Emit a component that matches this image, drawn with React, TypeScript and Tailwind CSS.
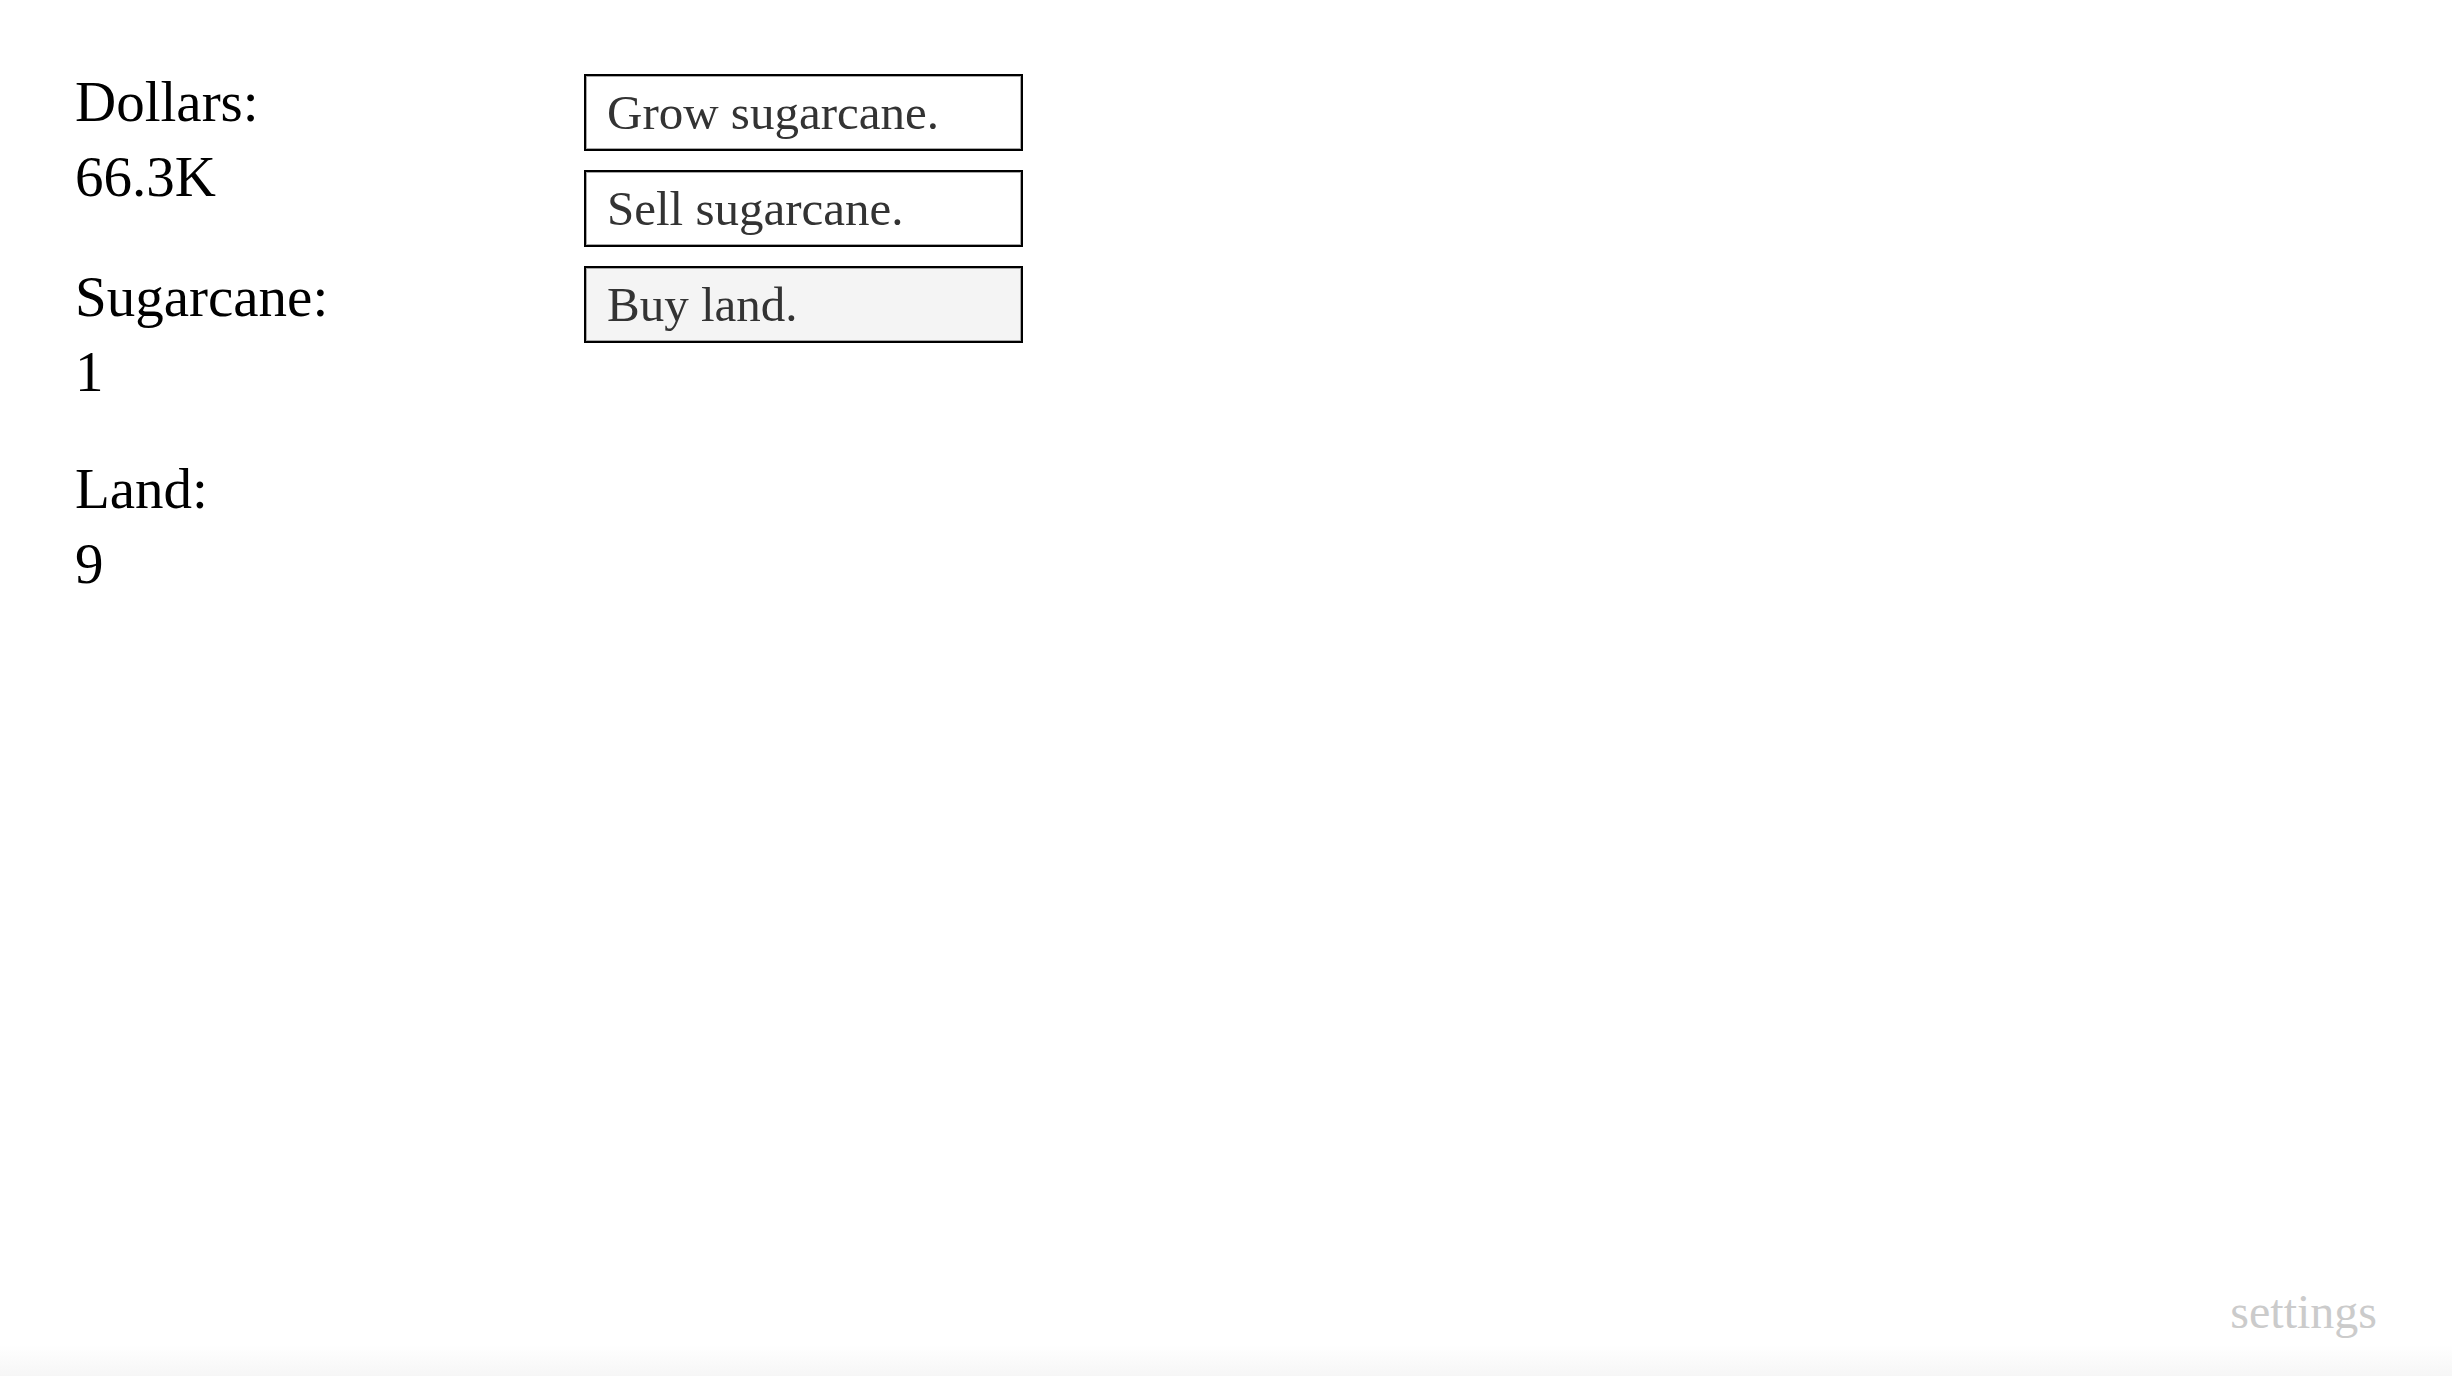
const stats = [
  { label: 'Dollars:', value: '66.3K', gap: 'mt-0' },
  { label: 'Sugarcane:', value: '1', gap: 'mt-[45px]' },
  { label: 'Land:', value: '9', gap: 'mt-[42px]' },
]

const actions = [
  { label: 'Grow sugarcane.', muted: false },
  { label: 'Sell sugarcane.', muted: false },
  { label: 'Buy land.', muted: true },
]

export default function App() {
  return (
    <div className="h-screen flex flex-col bg-white font-['Liberation_Serif','Times_New_Roman',serif]">
      <main className="flex px-[75px] pt-[64px]">
        {/* Resources */}
        <div className="w-[509px] shrink-0 flex flex-col">
          {stats.map((s) => (
            <div key={s.label} className={s.gap}>
              <p className="text-[57px] leading-[75px] text-black">{s.label}</p>
              <p className="text-[57px] leading-[75px] text-black">{s.value}</p>
            </div>
          ))}
        </div>

        {/* Actions */}
        <div className="flex flex-col gap-[19px] pt-[10px]">
          {actions.map((a) => (
            <button
              key={a.label}
              className={`w-[439px] h-[77px] border-2 border-black shadow-[inset_0_0_0_1px_#a8a8a8] pl-[21px] text-left text-[49px] leading-[55px] text-[#333] ${
                a.muted ? 'bg-[#f4f4f4]' : 'bg-white'
              }`}
            >
              {a.label}
            </button>
          ))}
        </div>
      </main>

      <div className="flex-1" />

      <footer className="flex justify-end pr-[75px] mb-[6px]">
        <span className="text-[48px] leading-[55px] text-[#cbcbcb]">settings</span>
      </footer>
      <div className="h-[31px] bg-linear-to-b from-white to-[#f6f6f6]" />
    </div>
  )
}
